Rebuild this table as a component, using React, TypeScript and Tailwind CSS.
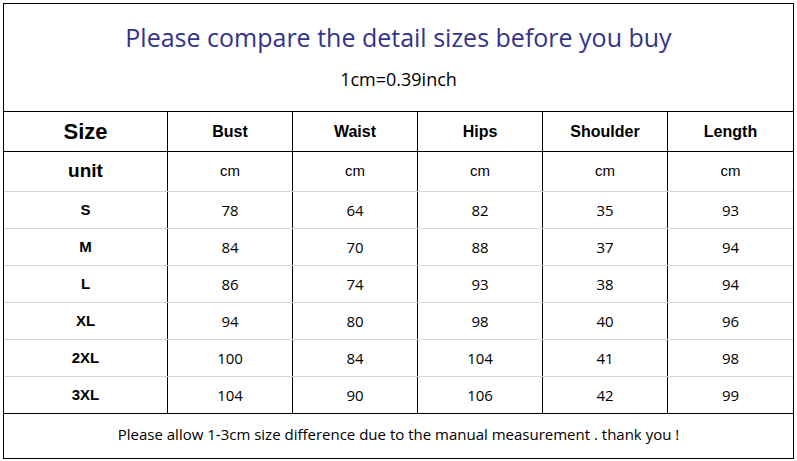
const cols = ["Bust", "Waist", "Hips", "Shoulder", "Length"];

const rows: [string, number[]][] = [
  ["S", [78, 64, 82, 35, 93]],
  ["M", [84, 70, 88, 37, 94]],
  ["L", [86, 74, 93, 38, 94]],
  ["XL", [94, 80, 98, 40, 96]],
  ["2XL", [100, 84, 104, 41, 98]],
  ["3XL", [104, 90, 106, 42, 99]],
];

const sans = "font-['Liberation_Sans',Arial,sans-serif]";
const soft = "font-['Open_Sans','Noto_Sans',sans-serif]";

export default function App() {
  return (
    <div className="w-[797px] h-[461px] bg-white pt-[3px] pl-[3px]">
      <div className="w-[791px] h-[456px] border border-black flex flex-col text-black">
        {/* title block */}
        <div className="h-[108px] flex flex-col items-center border-b border-black">
          <h1 className={`${soft} text-[25px] leading-none text-[#34338a] mt-[21px]`}>
            Please compare the detail sizes before you buy
          </h1>
          <p className={`${soft} text-[18px] leading-none mt-[20px]`}>1cm=0.39inch</p>
        </div>

        {/* header row */}
        <div className="grid grid-cols-[164px_repeat(5,125px)] h-[40px] border-b border-black">
          <div className={`${sans} font-bold text-[22px] flex items-center justify-center border-r border-black`}>
            Size
          </div>
          {cols.map((c, i) => (
            <div
              key={c}
              className={`${sans} font-bold text-[16px] flex items-center justify-center ${i < 4 ? "border-r border-black" : ""}`}
            >
              {c}
            </div>
          ))}
        </div>

        {/* unit row */}
        <div className="grid grid-cols-[164px_repeat(5,125px)] h-[40px] border-b border-[#d4d4d4]">
          <div className={`${sans} font-bold text-[19px] flex items-center justify-center border-r border-black`}>
            unit
          </div>
          {cols.map((c, i) => (
            <div
              key={c}
              className={`${sans} text-[15px] flex items-center justify-center ${i < 4 ? "border-r border-black" : ""}`}
            >
              cm
            </div>
          ))}
        </div>

        {rows.map(([size, vals], r) => (
          <div
            key={size}
            className={`grid grid-cols-[164px_repeat(5,125px)] h-[37px] border-b ${r === rows.length - 1 ? "border-black" : "border-[#d4d4d4]"}`}
          >
            <div className={`${sans} font-bold text-[15px] flex items-center justify-center border-r border-black`}>
              {size}
            </div>
            {vals.map((v, i) => (
              <div
                key={i}
                className={`${soft} text-[15px] flex items-center justify-center ${i < 4 ? "border-r border-black" : ""}`}
              >
                {v}
              </div>
            ))}
          </div>
        ))}

        {/* footer note */}
        <div className={`${soft} flex-1 flex items-center justify-center text-[15px] pb-[3px]`}>
          Please allow 1-3cm size difference due to the manual measurement . thank you !
        </div>
      </div>
    </div>
  );
}
